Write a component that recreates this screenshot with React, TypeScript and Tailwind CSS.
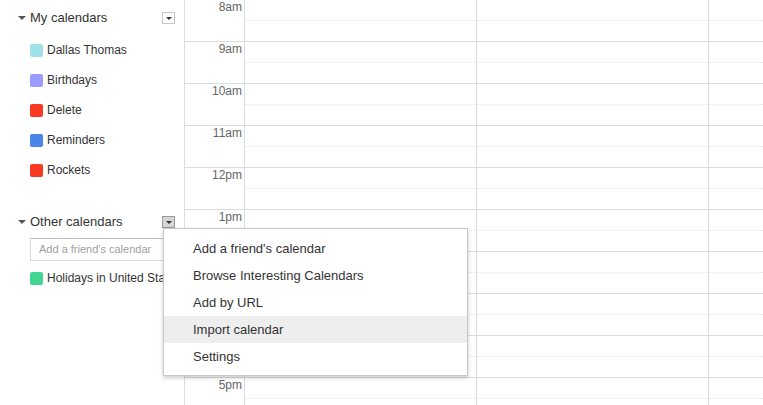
import React from "react";

const myCalendars = [
  { name: "Dallas Thomas", color: "bg-[#9fe1e7]" },
  { name: "Birthdays", color: "bg-[#9a9cff]" },
  { name: "Delete", color: "bg-[#f83a22]" },
  { name: "Reminders", color: "bg-[#4986e7]" },
  { name: "Rockets", color: "bg-[#f83a22]" },
];

const hours = ["8am", "9am", "10am", "11am", "12pm", "1pm", "2pm", "3pm", "4pm", "5pm"];

const menuItems = ["Add a friend's calendar", "Browse Interesting Calendars", "Add by URL", "Import calendar", "Settings"];

function Caret() {
  return <span className="w-0 h-0 border-l-[4px] border-r-[4px] border-t-[4px] border-l-transparent border-r-transparent border-t-[#555]" />;
}

function SectionHeader({ title, active }: { title: string; active?: boolean }) {
  return (
    <div className="flex items-center h-[24px] pl-[18px] pr-[9px]">
      <Caret />
      <span className="ml-[4px] text-[13px] text-[#333]">{title}</span>
      <span
        className={
          "ml-auto w-[13px] h-[12px] flex items-center justify-center border " +
          (active ? "bg-[#d6d6d6] border-[#999]" : "bg-white border-[#c6c6c6]")
        }
      >
        <span className="w-0 h-0 border-l-[3px] border-r-[3px] border-t-[3px] border-l-transparent border-r-transparent border-t-[#333]" />
      </span>
    </div>
  );
}

function CalendarRow({ name, color }: { name: string; color: string }) {
  return (
    <div className="flex items-center h-[30px] pl-[30px] whitespace-nowrap">
      <span className={"w-[13px] h-[13px] rounded-[2px] shrink-0 " + color} />
      <span className="ml-[4px] text-[12px] text-[#333]">{name}</span>
    </div>
  );
}

function DayColumn({ last }: { last?: boolean }) {
  return (
    <div className={"flex flex-col " + (last ? "flex-1" : "w-[232px] border-r border-[#dddddd]")}>
      {hours.map((h) => (
        <div key={h} className="h-[42px] shrink-0 border-t border-[#dddddd] flex flex-col">
          <div className="h-[20px]" />
          <div className="border-t border-dotted border-[#e6e6e6]" />
        </div>
      ))}
    </div>
  );
}

export default function App() {
  return (
    <div className="relative flex w-[763px] h-[405px] overflow-hidden bg-white" style={{ fontFamily: '"Liberation Sans", Arial, sans-serif' }}>
      <aside className="w-[185px] shrink-0 border-r border-[#dddddd] flex flex-col pt-[6px] overflow-hidden">
        <SectionHeader title="My calendars" />
        <div className="mt-[5px]">
          {myCalendars.map((c) => (
            <CalendarRow key={c.name} name={c.name} color={c.color} />
          ))}
        </div>
        <div className="mt-[25px]">
          <SectionHeader title="Other calendars" active />
        </div>
        <div className="mt-[4px] ml-[30px] w-[137px] h-[23px] border border-[#d9d9d9] border-t-[#c0c0c0] flex items-center pl-[8px] text-[11px] text-[#a0a0a0] whitespace-nowrap">
          Add a friend's calendar
        </div>
        <div className="mt-[2px]">
          <CalendarRow name="Holidays in United States" color="bg-[#42d692]" />
        </div>
      </aside>

      <div className="flex flex-1 -mt-px">
        <div className="w-[60px] shrink-0 border-r border-[#dddddd] flex flex-col">
          {hours.map((h) => (
            <div key={h} className="h-[42px] shrink-0 border-t border-[#dddddd] pr-[2px] text-right text-[12px] text-[#666] leading-[14px]">
              {h}
            </div>
          ))}
        </div>
        <DayColumn />
        <DayColumn />
        <DayColumn last />
      </div>

      <div className="absolute left-[163px] top-[228px] w-[305px] bg-white border border-[#c8c8c8] shadow-[0_2px_4px_rgba(0,0,0,0.2)] pt-[6px] pb-[5px]">
        {menuItems.map((item) => (
          <div
            key={item}
            className={"h-[27px] flex items-center pl-[29px] text-[13px] text-[#333] " + (item === "Import calendar" ? "bg-[#eeeeee]" : "")}
          >
            {item}
          </div>
        ))}
      </div>
    </div>
  );
}
